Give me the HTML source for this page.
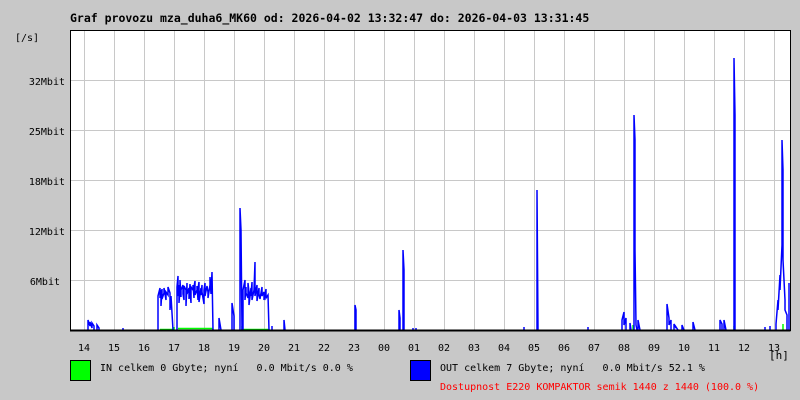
<!DOCTYPE html>
<html><head><meta charset="utf-8"><style>
html,body{margin:0;padding:0;background:#c8c8c8;width:800px;height:400px;overflow:hidden}
svg text{font-family:"DejaVu Sans Mono","Liberation Mono",monospace;font-size:10px;fill:#000;white-space:pre}
</style></head><body>
<svg width="800" height="400" xmlns="http://www.w3.org/2000/svg">
<rect width="800" height="400" fill="#c8c8c8"/>
<text x="70" y="22" font-weight="bold" style="font-size:11.5px">Graf provozu mza_duha6_MK60 od: 2026-04-02 13:32:47 do: 2026-04-03 13:31:45</text>
<rect x="70" y="30" width="720" height="300" fill="#fff"/>
<g stroke="#c8c8c8" stroke-width="1">
<path d="M84.5 30V330M114.5 30V330M144.5 30V330M174.5 30V330M204.5 30V330M234.5 30V330M264.5 30V330M294.5 30V330M324.5 30V330M354.5 30V330M384.5 30V330M414.5 30V330M444.5 30V330M474.5 30V330M504.5 30V330M534.5 30V330M564.5 30V330M594.5 30V330M624.5 30V330M654.5 30V330M684.5 30V330M714.5 30V330M744.5 30V330M774.5 30V330"/>
<path d="M70 80.5H790M70 130.5H790M70 180.5H790M70 230.5H790M70 280.5H790"/>
</g>
<g fill="none" stroke="#00ff00" stroke-width="1.5">
<path d="M160 329.5H173M178 328.5H213M241 329.5H269M174 327V330M242 326V330M633 325V330M734 326V330M783 324V330"/>
</g>
<g fill="none" stroke="#0000ff" stroke-width="1.5">
<path d="M88 330V320L90 326V322L92 328V323L94 326V330M97 330V325L99 328V330M123 330V328M158 330V296L160 288V298L161 290V306L162 289V299L164 293V288L166 300V292L168 295V287L170 293V310L171 296L173 330M177 330V287L178 276V296L179 285V303L180 290V280L181 297V290L183 285V294L184 300V286L186 290V306L187 283V294L189 288V299L190 284V291L191 303V287L193 290V285L194 298V287L195 281V295L197 290V286L198 300V289L199 282V302L201 288V295L202 285V292L204 304V290L205 283V296L207 286L208 292V298L210 285V277L211 294L212 272L213 330M219 330V318L221 330M232 330V303L234 316V330M240 330V208L241 230L242 330M243 330V290L245 280V300L246 287V293L248 298V283L249 292V305L251 288V296L252 282V300L254 290L255 262V296L257 285V301L259 288V294L260 299L262 287V296L264 292V300L266 289V298L268 295L269 330M272 330V326M284 330V320L285 330M355 330V305L356 310V330M399 330V310L400 318V330M403 330V250L404 270V330M413 330V328M416 330V328M524 330V327M537 330V190L538 330M588 330V327M622 330V320L624 312V325L626 318V330M630 330V323L631 330M634 330V115L635 140V250L636 325L637 330M638 330V320L640 330M667 330V304L669 318V325L671 320V330M674 330V324L676 328V327L678 330M682 330V325L684 330M693 330V322L695 330M720 330V320L722 324V330M724 330V320L726 330M734 330V58L735 115V330M765 330V327M770 330V326M776 330V324L778 300V310L780 275V290L782 245V140L783 170V260L785 300V310L787 315V330M789 330V283"/>
</g>
<path d="M70.5 30V330.5H790.5V30" fill="none" stroke="#000" stroke-width="1"/>
<path d="M70 30.5H790.5V330" fill="none" stroke="#000" stroke-width="1"/>
<path d="M70 330.5H790.5" fill="none" stroke="#000" stroke-width="2"/>
<text x="15" y="41">[/s]</text>
<g text-anchor="end">
<text x="65" y="85">32Mbit</text>
<text x="65" y="135">25Mbit</text>
<text x="65" y="185">18Mbit</text>
<text x="65" y="235">12Mbit</text>
<text x="60" y="285">6Mbit</text>
</g>
<g text-anchor="middle" style="font-size:11px">
<text x="84" y="351">14</text><text x="114" y="351">15</text><text x="144" y="351">16</text><text x="174" y="351">17</text><text x="204" y="351">18</text><text x="234" y="351">19</text><text x="264" y="351">20</text><text x="294" y="351">21</text><text x="324" y="351">22</text><text x="354" y="351">23</text><text x="384" y="351">00</text><text x="414" y="351">01</text><text x="444" y="351">02</text><text x="474" y="351">03</text><text x="504" y="351">04</text><text x="534" y="351">05</text><text x="564" y="351">06</text><text x="594" y="351">07</text><text x="624" y="351">08</text><text x="654" y="351">09</text><text x="684" y="351">10</text><text x="714" y="351">11</text><text x="744" y="351">12</text><text x="774" y="351">13</text>
</g>
<text x="769" y="359" style="font-size:11px">[h]</text>
<rect x="70.5" y="360.5" width="20" height="20" fill="#00ff00" stroke="#000"/>
<text x="100" y="371">IN celkem 0 Gbyte; nyní   0.0 Mbit/s 0.0 %</text>
<rect x="410.5" y="360.5" width="20" height="20" fill="#0000ff" stroke="#000"/>
<text x="440" y="371">OUT celkem 7 Gbyte; nyní   0.0 Mbit/s 52.1 %</text>
<text x="440" y="390" style="fill:#ff0000">Dostupnost E220 KOMPAKTOR semik 1440 z 1440 (100.0 %)</text>
</svg>
</body></html>
